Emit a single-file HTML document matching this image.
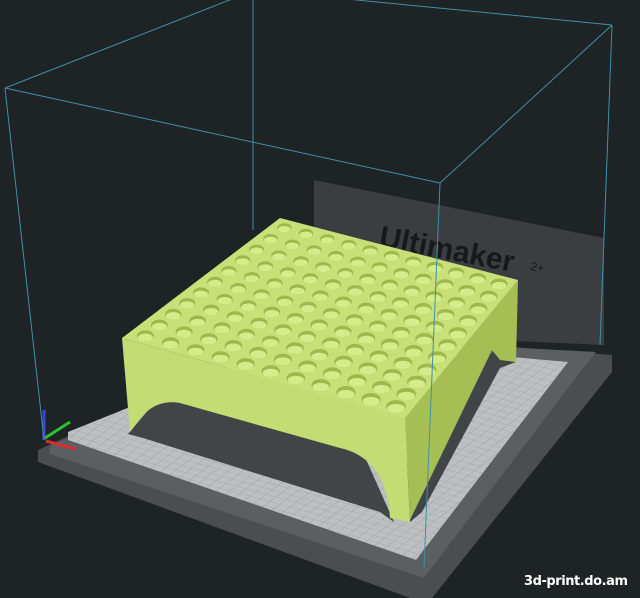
<!DOCTYPE html>
<html><head><meta charset="utf-8"><style>
html,body{margin:0;padding:0;background:#1e2326;width:640px;height:598px;overflow:hidden}
svg{display:block}
</style></head><body>
<svg id="s" width="640" height="598" viewBox="0 0 640 598" xmlns="http://www.w3.org/2000/svg">
<defs>
<pattern id="grid" width="10" height="10" patternUnits="userSpaceOnUse" patternTransform="matrix(1,0.27,-0.6,0.45,0,0)">
<rect width="10" height="10" fill="#bdbfc0"/>
<path d="M0 0H10M0 0V10" stroke="#9a9c9e" stroke-width="1"/>
</pattern>
</defs>
<rect width="640" height="598" fill="#1e2326"/>
<polygon points="314,180 604,238 604,345 314,332" fill="#3b3e41"/>
<text x="378" y="246" font-family="Liberation Sans, sans-serif" font-weight="bold" font-size="30" fill="#16181a" transform="rotate(11 378 246)">Ultimaker</text>
<text x="530" y="270" font-family="Liberation Sans, sans-serif" font-size="12" fill="#16181a" transform="rotate(11 530 270)">2+</text>
<polygon points="38,450 300,330 612,355 612,372 432,598 410,598 38,462" fill="#4a4e51"/>
<polygon points="50,446 300,336 596,352 580,372 424,578 50,454" fill="#5b5f61"/>
<polygon points="68,432 300,338 568,362 416,560 68,440" fill="url(#grid)"/>
<!-- shadows -->
<polygon points="128,434 160,396 360,446 394,522 380,512 143,438" fill="#424547"/>
<polygon points="405,470 410,522 422,512 500,368 516,362 498,352 440,360" fill="#424547"/>
<g id="model">
<polygon points="405,418 518,280 516,362 500,360 492,350 410,520" fill="#a6bf55"/>
<path d="M122,338 L405,418 L410,522 L390,518 C388,480 372,455 340,448 L180,403 C150,398 140,420 130,432 Z" fill="#c3dc73"/>
<polygon points="280,218 518,280 405,418 122,338" fill="#c8e077"/>
</g>
<g id="holes"></g>
<line x1="44" y1="440" x2="44" y2="410" stroke="#3a46d8" stroke-width="3"/>
<line x1="45" y1="438" x2="70" y2="422" stroke="#2fc02f" stroke-width="3"/>
<line x1="46" y1="441" x2="76" y2="449" stroke="#d43030" stroke-width="3"/>
<g stroke="#3f8fa5" stroke-width="1" fill="none">
<line x1="5" y1="88" x2="440" y2="183"/>
<line x1="440" y1="183" x2="612" y2="25"/>
<line x1="5" y1="88" x2="255" y2="-10"/>
<line x1="612" y1="25" x2="255" y2="-10"/>
<line x1="5" y1="88" x2="44" y2="440"/>
<line x1="440" y1="183" x2="424" y2="568"/>
<line x1="612" y1="25" x2="600" y2="345"/>
<line x1="253" y1="0" x2="253" y2="230"/>
</g>
<text x="524" y="585" font-family="DejaVu Sans, sans-serif" font-weight="bold" font-size="13" textLength="104" fill="#ffffff">3d-print.do.am</text>
</svg>
<script>
var B=[280,218],R=[518,280],F=[405,418],L=[122,338];
var g=document.getElementById('holes'),n=11,h='';
for(var i=0;i<n;i++)for(var j=0;j<n;j++){
var u=(i+0.6)/(n+0.2),v=(j+0.6)/(n+0.2);
var x=(1-u)*(1-v)*B[0]+u*(1-v)*R[0]+u*v*F[0]+(1-u)*v*L[0];
var y=(1-u)*(1-v)*B[1]+u*(1-v)*R[1]+u*v*F[1]+(1-u)*v*L[1];
var r=7+3*(u+v)/2;
h+='<ellipse cx="'+x+'" cy="'+y+'" rx="'+r+'" ry="'+(r*0.65)+'" fill="#9fb84b"/>';
h+='<ellipse cx="'+x+'" cy="'+(y+r*0.2)+'" rx="'+(r*0.88)+'" ry="'+(r*0.45)+'" fill="#d6ec8a"/>';
}
g.innerHTML=h;
</script>
</body></html>
